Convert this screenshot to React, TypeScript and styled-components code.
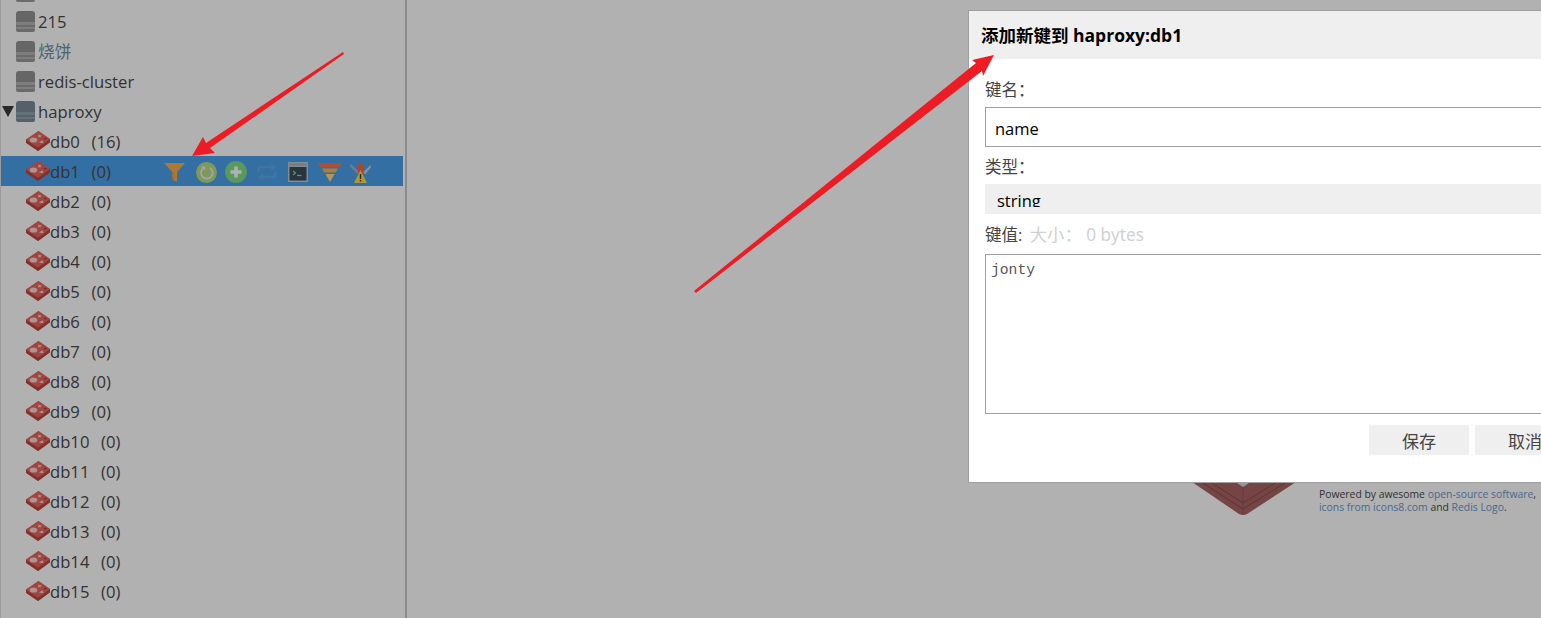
import React from "react";
import styled, { createGlobalStyle } from "styled-components";

const Global = createGlobalStyle`
  html, body { margin: 0; padding: 0; background: #fff; }
  * { box-sizing: border-box; }
`;

const Page = styled.div`
  position: relative;
  width: 1541px;
  height: 618px;
  overflow: hidden;
  display: flex;
  font-family: "Open Sans", "Noto Sans CJK SC", sans-serif;
  color: #4a4a4a;
`;

const Sidebar = styled.aside`
  width: 407px;
  flex: none;
  overflow: hidden;
  border-left: 1px solid #e0e0e0;
  border-right: 2px solid #c8c8c8;
  padding-right: 2px;
`;

const Tree = styled.ul`
  list-style: none;
  margin: -24px 0 0;
  padding: 0;
`;

const ServerRow = styled.li`
  height: 30px;
  display: flex;
  align-items: center;
  padding-left: 1px;
`;

const Caret = styled.span<{ $open?: boolean }>`
  width: 14px;
  flex: none;
  display: flex;
  justify-content: flex-start;
  &::before {
    content: "";
    display: ${(p) => (p.$open ? "block" : "none")};
    border-left: 6px solid transparent;
    border-right: 6px solid transparent;
    border-top: 11px solid #3a3a3a;
    margin-top: 1px;
  }
`;

const Name = styled.span<{ $tint?: string }>`
  font-size: 16.65px;
  white-space: pre;
  color: ${(p) => p.$tint || "#4a4a4a"};
`;

const ServerName = styled(Name)`
  margin-left: 3px;
`;

const DbRow = styled.li<{ $selected?: boolean }>`
  height: 30px;
  display: flex;
  align-items: center;
  padding-left: 25px;
  background: ${(p) => (p.$selected ? "#4ca1eb" : "transparent")};
  color: #4a4a4a;
`;

const DbName = styled(Name)`
  word-spacing: 1.5px;
`;

const Tools = styled.div`
  position: absolute;
  left: 163px;
  top: 161px;
  height: 22px;
  display: flex;
  align-items: center;
`;

const ToolSlot = styled.span<{ $w: number }>`
  width: ${(p) => p.$w}px;
  height: 22px;
  display: flex;
  align-items: center;
  justify-content: center;
  flex: none;
  & > svg {
    flex: none;
  }
`;

const Main = styled.main`
  flex: 1;
  display: flex;
  align-items: flex-end;
  padding: 0 0 102px 785px;
`;

const Credit = styled.p`
  margin: 0 0 2px 22px;
  width: 230px;
  flex: none;
  font-size: 10.38px;
  line-height: 13px;
  color: #4a4a4a;
`;

const CreditLink = styled.a`
  color: #6b96cf;
  text-decoration: none;
`;

const Overlay = styled.div`
  position: absolute;
  inset: 0;
  background: rgba(0, 0, 0, 0.305);
`;

const Modal = styled.section`
  position: absolute;
  left: 968px;
  top: 10px;
  width: 624px;
  height: 473px;
  background: #fff;
  border: 1px solid #a0a0a0;
`;

const ModalHeader = styled.h2`
  margin: 0;
  height: 48px;
  padding: 0 12px 2px;
  display: flex;
  align-items: center;
  background: #efefef;
  color: #000;
  font-size: 17.5px;
  font-weight: 700;
`;

const ModalBody = styled.form`
  padding: 18px 16px 0;
  display: flex;
  flex-direction: column;
`;

const Label = styled.label<{ $top?: number; $bottom?: number }>`
  display: block;
  height: 24px;
  line-height: 26px;
  margin-top: ${(p) => p.$top ?? 0}px;
  margin-bottom: ${(p) => p.$bottom ?? 6}px;
  font-size: 16.5px;
  color: #444;
  white-space: pre;
`;

const SizeHint = styled.span`
  margin-left: 3px;
  color: #cfcfcf;
  font-size: 17.3px;
`;

const TextInput = styled.input`
  display: block;
  width: 100%;
  height: 40px;
  padding: 2px 9px 0;
  border: 1px solid #a0a0a0;
  border-radius: 0;
  outline: none;
  background: #fff;
  color: #000;
  font: 400 16.5px "Open Sans", sans-serif;
`;

const TypeSelect = styled.div`
  height: 30px;
  padding-left: 12px;
  background: #efefef;
  color: #000;
  font-size: 16.5px;
`;

const TypeValue = styled.div`
  height: 23px;
  overflow: hidden;
  line-height: 33px;
`;

const ValueArea = styled.textarea`
  display: block;
  width: 100%;
  height: 160px;
  padding: 7px 5px;
  border: 1px solid #a0a0a0;
  border-radius: 0;
  outline: none;
  resize: none;
  color: #555;
  font: 400 14.67px/17px "Liberation Mono", monospace;
`;

const Actions = styled.div`
  margin-top: 11px;
  display: flex;
  justify-content: flex-end;
  gap: 6px;
`;

const ActionButton = styled.button`
  width: 100px;
  height: 30px;
  padding: 0;
  border: 0;
  background: #efefef;
  color: #444;
  font: 400 17px "Noto Sans CJK SC", sans-serif;
`;

const Annotations = styled.svg`
  position: absolute;
  left: 0;
  top: 0;
  pointer-events: none;
`;

const ServerIcon = ({ tone = "grey" }: { tone?: "grey" | "slate" }) => {
  const c = tone === "slate"
    ? { top: "#7a8c9a", a: "#8fa3b0", b: "#7a8c9a" }
    : { top: "#949494", a: "#b4b4b4", b: "#9a9a9a" };
  return (
    <svg width="19" height="21" viewBox="0 0 19 21" style={{ flex: "none" }}>
      <path d="M0 11V3Q0 0 3 0H16Q19 0 19 3V11Z" fill={c.top} />
      <rect y="11" width="19" height="3" fill={c.a} />
      <rect y="14" width="19" height="2" fill={c.b} />
      <rect y="16" width="19" height="2" fill={c.a} />
      <path d="M0 18H19V19Q19 21 17 21H2Q0 21 0 19Z" fill={c.b} />
    </svg>
  );
};

const DbIcon = () => (
  <svg width="24" height="20" viewBox="0 0 24 20" style={{ flex: "none" }}>
    <path d="M1 9V11.500L12 19L23 11V8.500Z" fill="#b9473f" stroke="#b9473f" strokeWidth="2" strokeLinejoin="round" />
    <path d="M1.500 8.500L12.500 1L22.500 8L12 15.500Z" fill="#ea625b" stroke="#ea625b" strokeWidth="2" strokeLinejoin="round" />
    <ellipse cx="7.500" cy="9" rx="3.800" ry="2.600" fill="#f7d8d4" />
    <path d="M12.500 3.200l1.300 1.100 1.800-.2-1 1.200.7 1.200-1.800-.5-1.500.8.400-1.400z" fill="#f7d8d4" />
    <path d="M13 11.500L16.500 9.300L17.500 12.300Z" fill="#f7d8d4" />
    <path d="M19.300 6.800L21 7.600L19.300 8.500L17.500 7.600Z" fill="#a83a34" />
  </svg>
);

const FunnelIcon = () => (
  <svg width="21" height="19" viewBox="0 0 21 19">
    <path d="M0 0H21L13 9V19L8.500 16.500V9Z" fill="#fdaf45" />
    <path d="M8.500 9H10.500V17.600L8.500 16.500Z" fill="#f0a040" />
  </svg>
);

const RefreshIcon = () => (
  <svg width="21" height="21" viewBox="0 0 21 21">
    <circle cx="10.500" cy="10.500" r="10.500" fill="#b4dd84" />
    <path d="M7.300 6.300A5.800 5.800 0 1 0 14 6" fill="none" stroke="#f0f0e4" strokeWidth="1.800" />
    <path d="M5 4.500H9.200V8.500Z" fill="#f0f0e4" />
  </svg>
);

const PlusIcon = () => (
  <svg width="22" height="22" viewBox="0 0 22 22">
    <circle cx="11" cy="11" r="11" fill="#81dd87" />
    <path d="M11 5.500V16.500M5.500 11H16.500" stroke="#fff" strokeWidth="3.600" />
  </svg>
);

const RepeatIcon = () => (
  <svg width="20" height="20" viewBox="0 0 20 20" fill="none" stroke="#5fa9e4" strokeWidth="2.600">
    <path d="M1.500 10V7.500Q1.500 5 4 5H15" />
    <path d="M18.500 10V12.500Q18.500 15 16 15H5" />
    <path d="M14 1L19.500 5L14 9Z" fill="#5fa9e4" stroke="none" />
    <path d="M6 11L0.500 15L6 19Z" fill="#5fa9e4" stroke="none" />
  </svg>
);

const ConsoleIcon = () => (
  <svg width="20" height="20" viewBox="0 0 20 20">
    <rect width="20" height="20" fill="#bcc9d1" />
    <rect x="1.500" y="5" width="17" height="13.500" fill="#3f4b54" />
    <rect x="1.500" y="1.500" width="17" height="2" fill="#a3b1ba" />
    <path d="M5 9L7.500 11L5 13" fill="none" stroke="#5fe3e3" strokeWidth="1.100" />
    <path d="M9 13.500H13.500" stroke="#5fe3e3" strokeWidth="1.200" />
  </svg>
);

const LayersIcon = () => (
  <svg width="24" height="19" viewBox="0 0 24 19">
    <path d="M0 0H24L21.500 4H2.500Z" fill="#ff7348" />
    <path d="M4 5.500H20L17.700 9.500H6.300Z" fill="#ffb84a" />
    <path d="M7.500 11H16.500L12 19Z" fill="#ffdc80" />
  </svg>
);

const KnifeIcon = () => (
  <svg width="21" height="21" viewBox="0 0 21 21">
    <path d="M0.500 1.500L9 9.500L7.500 12L0 4.500Z" fill="#8fb4d8" />
    <path d="M20.500 3L13.500 10L15 12.500L21 5.500Z" fill="#c4cfdc" />
    <path d="M8 3Q10.500 -2 13 3V12H8Z" fill="#f5663e" />
    <path d="M10.500 8L17 21H4Z" fill="#ffd84a" />
    <path d="M9.800 12H11.200V17H9.800ZM9.800 18H11.200V19.400H9.800Z" fill="#4a3d1a" />
  </svg>
);

const RedisMark = () => (
  <svg width="105" height="106" viewBox="0 0 105 106" style={{ flex: "none", display: "block" }}>
    <path d="M0 56V72L47 104Q51 106 55 104L104 72V56L52 22Z" fill="#a96464" />
    <path d="M0 60L51 93L104 60M0 66L51 99L104 66" fill="none" stroke="#8a4a4a" strokeWidth="1" />
    <path d="M51 76V105" stroke="#955252" strokeWidth="1" />
    <path d="M42 71L51 77L60 71L51 66Z" fill="#d8d8d8" />
  </svg>
);

const tools: [number, React.ReactNode][] = [
  [22, <FunnelIcon key="f" />],
  [42, <RefreshIcon key="r" />],
  [18, <PlusIcon key="p" />],
  [44, <RepeatIcon key="s" />],
  [18, <ConsoleIcon key="c" />],
  [46, <LayersIcon key="l" />],
  [14, <KnifeIcon key="k" />],
];

const dbs = [
  ["db0", "16"], ["db1", "0"], ["db2", "0"], ["db3", "0"], ["db4", "0"], ["db5", "0"],
  ["db6", "0"], ["db7", "0"], ["db8", "0"], ["db9", "0"], ["db10", "0"], ["db11", "0"],
  ["db12", "0"], ["db13", "0"], ["db14", "0"], ["db15", "0"],
];

export default function App() {
  return (
    <>
      <Global />
      <Page>
        <Sidebar>
          <Tree>
            <ServerRow><Caret /><ServerIcon /><ServerName> </ServerName></ServerRow>
            <ServerRow><Caret /><ServerIcon /><ServerName>215</ServerName></ServerRow>
            <ServerRow><Caret /><ServerIcon /><ServerName $tint="#6f8ea5">烧饼</ServerName></ServerRow>
            <ServerRow><Caret /><ServerIcon /><ServerName>redis-cluster</ServerName></ServerRow>
            <ServerRow><Caret $open /><ServerIcon tone="slate" /><ServerName>haproxy</ServerName></ServerRow>
            {dbs.map(([name, count]) => (
              <DbRow key={name} $selected={name === "db1"}>
                <DbIcon />
                <DbName>{name}{"  "}({count})</DbName>
              </DbRow>
            ))}
          </Tree>
        </Sidebar>
        <Tools>
          {tools.map(([w, icon], i) => (
            <ToolSlot key={i} $w={w}>{icon}</ToolSlot>
          ))}
        </Tools>
        <Main>
          <RedisMark />
          <Credit>
            Powered by awesome <CreditLink>open-source software</CreditLink>,{" "}
            <CreditLink>icons from icons8.com</CreditLink> and <CreditLink>Redis Logo</CreditLink>.
          </Credit>
        </Main>
        <Overlay />
        <Modal>
          <ModalHeader>添加新键到 haproxy:db1</ModalHeader>
          <ModalBody>
            <Label>键名：</Label>
            <TextInput defaultValue="name" readOnly />
            <Label $top={7}>类型：</Label>
            <TypeSelect><TypeValue>string</TypeValue></TypeSelect>
            <Label $top={8} $bottom={8}>键值:<SizeHint> 大小： 0 bytes</SizeHint></Label>
            <ValueArea defaultValue="jonty" readOnly />
            <Actions>
              <ActionButton type="button">保存</ActionButton>
              <ActionButton type="button">取消</ActionButton>
            </Actions>
          </ModalBody>
        </Modal>
        <Annotations width="1541" height="618" viewBox="0 0 1541 618">
          <polygon points="192,156 203,137 206,143 343,52 344,54 210,148 215,153" fill="#ed1c24" />
          <polygon points="994,55 972,60 976,63 694,291 696,293 982,71 983,76" fill="#ed1c24" />
        </Annotations>
      </Page>
    </>
  );
}
